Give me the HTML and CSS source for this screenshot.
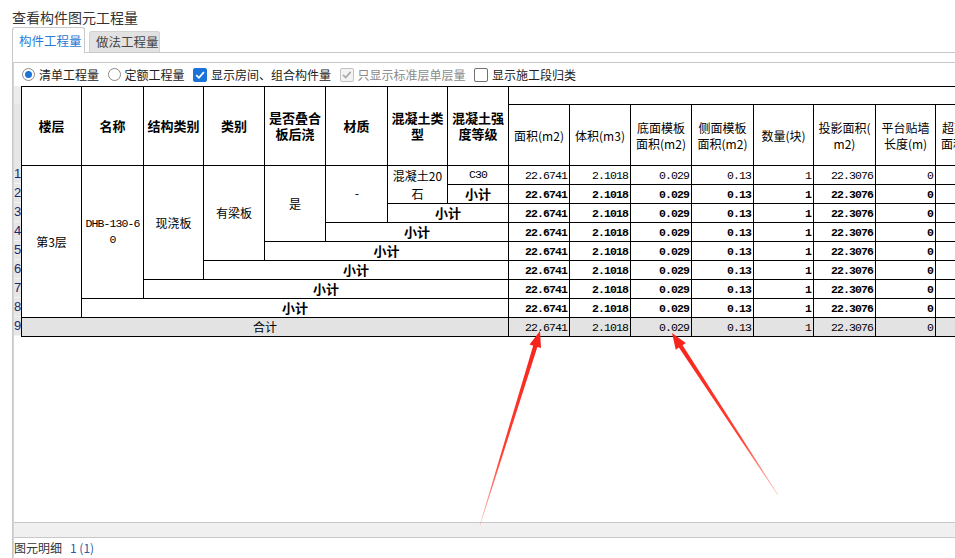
FILE: index.html
```html
<!DOCTYPE html>
<html lang="zh-CN">
<head>
<meta charset="utf-8">
<title>查看构件图元工程量</title>
<link rel="stylesheet" href="styles.css">
</head>
<body>
<div class="title">查看构件图元工程量</div>
<div class="tabs">
  <div class="tab active">构件工程量</div>
  <div class="tab">做法工程量</div>
</div>
<div class="tabbody">
  <div class="panel">
    <div class="options">
      <span class="opt"><span class="radio on"></span>清单工程量</span>
      <span class="opt"><span class="radio"></span>定额工程量</span>
      <span class="opt"><span class="chk on"><svg viewBox="0 0 14 14" width="14" height="14"><path d="M3.2 7.2 L5.9 9.8 L10.9 4.2" fill="none" stroke="#fff" stroke-width="1.8"/></svg></span>显示房间、组合构件量</span>
      <span class="opt dis"><span class="chk dis"><svg viewBox="0 0 14 14" width="14" height="14"><path d="M3 6.9 L5.7 9.5 L10.7 3.9" fill="none" stroke="#a8a8a8" stroke-width="1.6"/></svg></span>只显示标准层单层量</span>
      <span class="opt"><span class="chk"></span>显示施工段归类</span>
    </div>
    <div class="gridarea">
      <div class="rownums">
        <div class="rn-head"></div>
        <div class="rn">1</div><div class="rn">2</div><div class="rn">3</div>
        <div class="rn">4</div><div class="rn">5</div><div class="rn">6</div>
        <div class="rn">7</div><div class="rn">8</div><div class="rn">9</div>
      </div>
      <div class="grid">
        <div class="c h rs2">楼层</div>
        <div class="c h rs2">名称</div>
        <div class="c h rs2">结构类别</div>
        <div class="c h rs2">类别</div>
        <div class="c h rs2">是否叠合<br>板后浇</div>
        <div class="c h rs2">材质</div>
        <div class="c h rs2">混凝土类<br>型</div>
        <div class="c h rs2">混凝土强<br>度等级</div>
        <div class="c cs8"></div>
        <div class="c hn">面积(m2)</div>
        <div class="c hn">体积(m3)</div>
        <div class="c hn">底面模板<br>面积(m2)</div>
        <div class="c hn">侧面模板<br>面积(m2)</div>
        <div class="c hn">数量(块)</div>
        <div class="c hn">投影面积(<br>m2)</div>
        <div class="c hn">平台贴墙<br>长度(m)</div>
        <div class="c hn">超高模板<br>面积(m2)</div>

        <div class="c t rs8">第3层</div>
        <div class="c m rs7 brk">DHB-130-60</div>
        <div class="c t rs6">现浇板</div>
        <div class="c t rs5">有梁板</div>
        <div class="c t rs4">是</div>
        <div class="c m rs3">-</div>
        <div class="c t rs2">混凝土20石</div>
        <div class="c m">C30</div>
        <div class="c n">22.6741</div><div class="c n">2.1018</div><div class="c n">0.029</div><div class="c n">0.13</div><div class="c n">1</div><div class="c n">22.3076</div><div class="c n">0</div><div class="c n"></div>

        <div class="c h">小计</div>
        <div class="c n b">22.6741</div><div class="c n b">2.1018</div><div class="c n b">0.029</div><div class="c n b">0.13</div><div class="c n b">1</div><div class="c n b">22.3076</div><div class="c n b">0</div><div class="c n b"></div>

        <div class="c h cs2">小计</div>
        <div class="c n b">22.6741</div><div class="c n b">2.1018</div><div class="c n b">0.029</div><div class="c n b">0.13</div><div class="c n b">1</div><div class="c n b">22.3076</div><div class="c n b">0</div><div class="c n b"></div>

        <div class="c h cs3">小计</div>
        <div class="c n b">22.6741</div><div class="c n b">2.1018</div><div class="c n b">0.029</div><div class="c n b">0.13</div><div class="c n b">1</div><div class="c n b">22.3076</div><div class="c n b">0</div><div class="c n b"></div>

        <div class="c h cs4">小计</div>
        <div class="c n b">22.6741</div><div class="c n b">2.1018</div><div class="c n b">0.029</div><div class="c n b">0.13</div><div class="c n b">1</div><div class="c n b">22.3076</div><div class="c n b">0</div><div class="c n b"></div>

        <div class="c h cs5">小计</div>
        <div class="c n b">22.6741</div><div class="c n b">2.1018</div><div class="c n b">0.029</div><div class="c n b">0.13</div><div class="c n b">1</div><div class="c n b">22.3076</div><div class="c n b">0</div><div class="c n b"></div>

        <div class="c h cs6">小计</div>
        <div class="c n b">22.6741</div><div class="c n b">2.1018</div><div class="c n b">0.029</div><div class="c n b">0.13</div><div class="c n b">1</div><div class="c n b">22.3076</div><div class="c n b">0</div><div class="c n b"></div>

        <div class="c h cs7">小计</div>
        <div class="c n b">22.6741</div><div class="c n b">2.1018</div><div class="c n b">0.029</div><div class="c n b">0.13</div><div class="c n b">1</div><div class="c n b">22.3076</div><div class="c n b">0</div><div class="c n b"></div>

        <div class="c t cs8 tot">合计</div>
        <div class="c n tot">22.6741</div><div class="c n tot">2.1018</div><div class="c n tot">0.029</div><div class="c n tot">0.13</div><div class="c n tot">1</div><div class="c n tot">22.3076</div><div class="c n tot">0</div><div class="c n tot"></div>
      </div>
    </div>
    <div class="spacer"></div>
    <div class="hscroll"></div>
    <div class="status">图元明细<span class="count">1 (1)</span></div>
  </div>
</div>
<svg class="arrows" width="955" height="558" viewBox="0 0 955 558">
  <defs>
    <linearGradient id="g1" gradientUnits="userSpaceOnUse" x1="480" y1="525" x2="540" y2="331">
      <stop offset="0" stop-color="#ff2a1a" stop-opacity="0.25"/>
      <stop offset="0.35" stop-color="#ff2a1a" stop-opacity="0.9"/>
      <stop offset="1" stop-color="#f5221a"/>
    </linearGradient>
    <linearGradient id="g2" gradientUnits="userSpaceOnUse" x1="778" y1="495" x2="672" y2="333">
      <stop offset="0" stop-color="#ff2a1a" stop-opacity="0.25"/>
      <stop offset="0.35" stop-color="#ff2a1a" stop-opacity="0.9"/>
      <stop offset="1" stop-color="#f5221a"/>
    </linearGradient>
  </defs>
  <polygon fill="url(#g1)" points="480.29,525.09 537.37,346.94 541.0,348.06 540,331 529.54,344.52 533.17,345.64 479.71,524.91"/>
  <polygon fill="url(#g2)" points="778.25,494.84 682.60,345.19 685.78,343.11 672,333 675.74,349.68 678.92,347.59 777.75,495.16"/>
</svg>
</body>
</html>
```
FILE: styles.css
```css
html, body {
  margin: 0;
  padding: 0;
}
body {
  width: 955px;
  height: 558px;
  overflow: hidden;
  position: relative;
  display: flex;
  flex-direction: column;
  background: #fff;
  color: #222;
  font-family: "Noto Sans CJK SC", "Noto Sans", sans-serif;
  font-size: 12px;
}
.title {
  height: 27px;
  box-sizing: border-box;
  padding: 8px 0 0 12px;
  font-size: 14px;
  line-height: 19px;
  color: #333;
  flex: none;
}
.tabs {
  flex: none;
  display: flex;
  align-items: flex-end;
  height: 25px;
  margin-left: 12px;
  border-bottom: 1px solid #c8c8c8;
}
.tab {
  box-sizing: border-box;
  height: 21px;
  width: 71px;
  margin-left: 4px;
  padding-left: 6px;
  line-height: 20px;
  font-size: 12.5px;
  color: #444;
  background: #e2e2e2;
  border: 1px solid #d2d2d2;
  border-bottom: none;
  border-radius: 3px 3px 0 0;
}
.tab.active {
  margin-left: 0;
  width: 73px;
  height: 26px;
  margin-bottom: -1px;
  padding-left: 6px;
  line-height: 26px;
  color: #2a7ad5;
  background: #fff;
  border-color: #c8c8c8;
}
.tabbody {
  flex: 1;
  display: flex;
  flex-direction: column;
  margin-left: 12px;
  border-left: 1px solid #c8c8c8;
  padding-top: 9px;
  min-height: 0;
}
.panel {
  flex: 1;
  display: flex;
  flex-direction: column;
  border-top: 1px solid #c8c8c8;
  border-left: 1px solid #d6d6d6;
  min-height: 0;
  overflow: hidden;
}
.options {
  flex: none;
  height: 23px;
  display: flex;
  align-items: center;
  gap: 8.5px;
  padding-left: 8px;
  color: #222;
}
.opt {
  display: flex;
  align-items: center;
  gap: 4px;
  line-height: 16px;
  white-space: nowrap;
}
.opt.dis {
  color: #8a8a8a;
}
.radio {
  width: 13px;
  height: 13px;
  box-sizing: border-box;
  border: 1px solid #8a8a8a;
  border-radius: 50%;
  display: inline-flex;
  align-items: center;
  justify-content: center;
  background: #fff;
}
.radio.on::after {
  content: "";
  width: 7px;
  height: 7px;
  border-radius: 50%;
  background: #1d74d6;
}
.chk {
  width: 14px;
  height: 14px;
  box-sizing: border-box;
  border: 1px solid #707070;
  border-radius: 2px;
  background: #fff;
  display: inline-flex;
  align-items: center;
  justify-content: center;
  overflow: hidden;
}
.chk svg {
  display: block;
  flex: none;
}
.chk.on {
  background: #1a73d8;
  border-color: #1a73d8;
}
.chk.dis {
  background: #f3f3f3;
  border-color: #c2c2c2;
}
.gridarea {
  flex: none;
  display: flex;
  align-items: flex-start;
  overflow: hidden;
}
.rownums {
  flex: none;
  width: 7px;
  background: #e6e6e6;
  overflow: hidden;
}
.rn-head {
  height: 79px;
  box-sizing: border-box;
  border-top: 18px solid #ececec;
}
.rn {
  height: 19px;
  box-sizing: border-box;
  border-bottom: 1px solid #f3f3f3;
  font-family: "Liberation Sans", Arial, sans-serif;
  font-size: 13px;
  line-height: 18px;
  padding-left: 0;
  color: #1c2a6a;
  overflow: hidden;
}
.grid {
  flex: none;
  display: grid;
  grid-template-columns: 59px 61px 59px 60px 60px 61px 59px 60px 60px 60px 60px 61px 59px 61px 59px 60px;
  grid-template-rows: 17px 60px repeat(9, 18px);
  gap: 1px;
  padding: 1px;
  background: #000;
}
.c {
  background: #fff;
  display: flex;
  align-items: center;
  justify-content: center;
  text-align: center;
  overflow: hidden;
  color: #000;
  font-size: 12px;
  line-height: 17px;
  padding: 0 2px;
  min-width: 0;
}
.h {
  font-size: 13px;
  font-weight: bold;
  line-height: 16px;
}
.hn {
  font-size: 12px;
  line-height: 16px;
  padding-top: 1px;
}
.t {
  font-size: 12px;
  line-height: 18px;
}
.m {
  font-family: "Liberation Mono", "DejaVu Sans Mono", monospace;
  font-size: 11.5px;
  letter-spacing: -0.9px;
  line-height: 16px;
}
.brk {
  word-break: break-all;
  padding: 0 1px;
}
.n {
  justify-content: flex-end;
  font-family: "Liberation Mono", "DejaVu Sans Mono", monospace;
  font-size: 11.5px;
  letter-spacing: -0.9px;
  padding-right: 2px;
  white-space: nowrap;
}
.b {
  font-weight: bold;
}
.tot {
  background: #e3e3e3;
}
.rs2 { grid-row: span 2; }
.rs3 { grid-row: span 3; }
.rs4 { grid-row: span 4; }
.rs5 { grid-row: span 5; }
.rs6 { grid-row: span 6; }
.rs7 { grid-row: span 7; }
.rs8 { grid-row: span 8; }
.cs2 { grid-column: span 2; }
.cs3 { grid-column: span 3; }
.cs4 { grid-column: span 4; }
.cs5 { grid-column: span 5; }
.cs6 { grid-column: span 6; }
.cs7 { grid-column: span 7; }
.cs8 { grid-column: span 8; }
.spacer {
  flex: 1;
}
.hscroll {
  flex: none;
  height: 14px;
  border-top: 1px solid #c8c8c8;
  border-bottom: 1px solid #c8c8c8;
  background: #f0f0f0;
}
.status {
  flex: none;
  height: 20px;
  line-height: 20px;
  font-size: 12px;
  color: #333;
  white-space: nowrap;
}
.count {
  margin-left: 8px;
  color: #2a5ca8;
}
.arrows {
  position: absolute;
  left: 0;
  top: 0;
  pointer-events: none;
}
```
